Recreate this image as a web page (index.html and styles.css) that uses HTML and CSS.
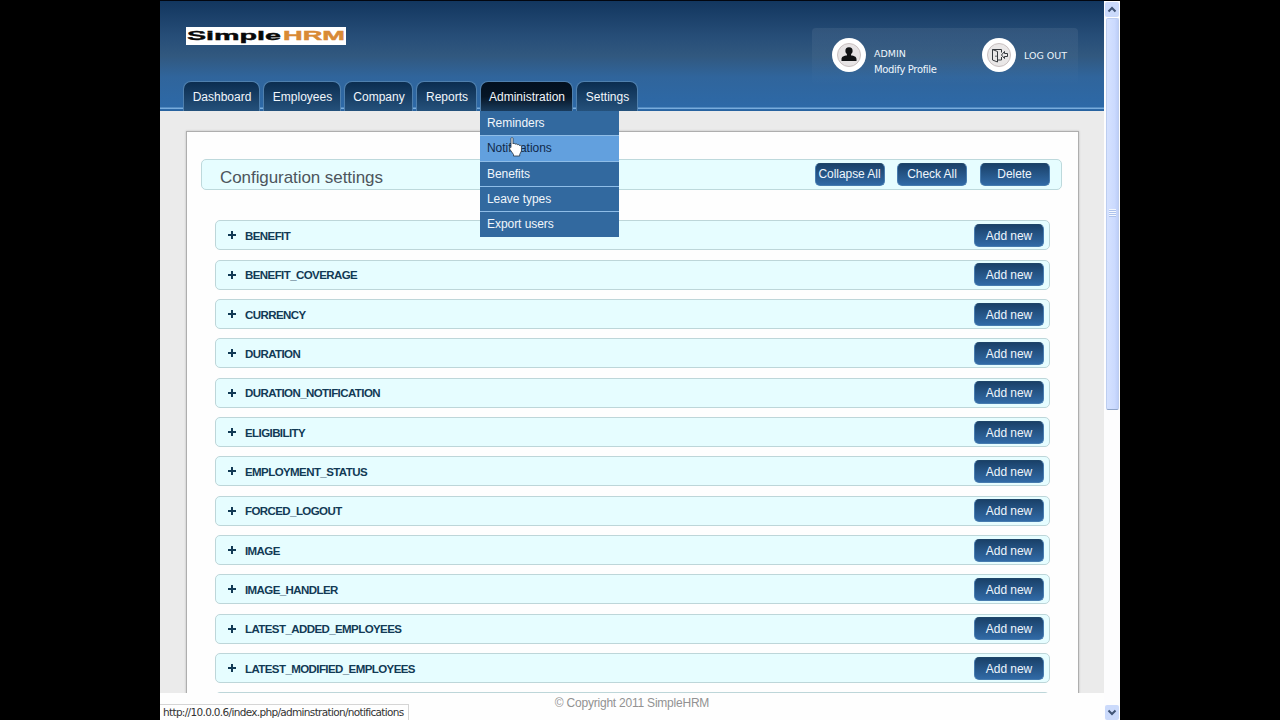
FILE: index.html
```html
<!DOCTYPE html>
<html>
  <head>
    <meta charset="utf-8">
    <title>SimpleHRM</title>
    <link rel="stylesheet" href="styles.css">
  </head>
  <body>
    <div class="screen">
      <div class="page">
        <div class="header">
          <div class="top">
            <svg class="logo" width="160" height="18" viewBox="0 0 160 18">
              <rect width="160" height="18" fill="#fff"/>
              <text x="1" y="13" textLength="94" lengthAdjust="spacingAndGlyphs" fill="#080808" stroke="#080808">Simple</text>
              <text x="97" y="13" textLength="62" lengthAdjust="spacingAndGlyphs" fill="#d98a35" stroke="#d98a35">HRM</text>
            </svg>
            <div class="user">
              <svg class="round" width="34" height="34" viewBox="0 0 34 34">
                <circle cx="17" cy="17" r="17" fill="#fff"/>
                <circle cx="17" cy="17" r="11.5" fill="#e6e3e4" stroke="#c9c0c0"/>
                <path d="M17 9.300c-2.500 0-3.800 1.600-3.600 3.900.1 1.400.8 2.200 1.500 2.800v1.400c-2.600.2-5.400 1-5.400 3.600v2h15v-2c0-2.600-2.800-3.400-5.400-3.600V16c.7-.6 1.400-1.400 1.500-2.800.2-2.300-1.100-3.900-3.600-3.900z" fill="#101214"/>
              </svg>
              <div class="profile">
                <div class="admin">ADMIN</div>
                <div class="modify">Modify Profile</div>
              </div>
              <svg class="round" width="34" height="34" viewBox="0 0 34 34">
                <circle cx="17" cy="17" r="17" fill="#fff"/>
                <circle cx="17" cy="17" r="11.5" fill="#e9e7e7" stroke="#c9c0c0"/>
                <path d="M10.500 11.500h9v3M10.500 11.500v10.500l5 2v-10.500l-5-2M15.500 22h4v-3M14 17.500v1.500M25.500 15.500h-3v-2l-3 3.500 3 3.500v-2h3z" fill="none" stroke="#34383c"/>
              </svg>
              <div class="logout">LOG OUT</div>
            </div>
          </div>
          <div class="nav">
            <div class="tab dashboard"><span>Dashboard</span></div>
            <div class="tab employees"><span>Employees</span></div>
            <div class="tab company"><span>Company</span></div>
            <div class="tab reports"><span>Reports</span></div>
            <div class="tab administration active"><span>Administration</span>
              <div class="menu">
                <div>Reminders</div>
                <div class="hover">Notifications</div>
                <div>Benefits</div>
                <div>Leave types</div>
                <div>Export users</div>
              </div>
            </div>
            <div class="tab settings"><span>Settings</span></div>
          </div>
        </div>
        <div class="content">
          <div class="panel">
            <div class="title">
              <h1>Configuration settings</h1>
              <div class="button">Collapse All</div>
              <div class="button">Check All</div>
              <div class="button">Delete</div>
            </div>
            <div class="rows">
              <div class="row"><i class="plus"></i><b>BENEFIT</b><div class="button">Add new</div></div>
              <div class="row"><i class="plus"></i><b>BENEFIT_COVERAGE</b><div class="button">Add new</div></div>
              <div class="row"><i class="plus"></i><b>CURRENCY</b><div class="button">Add new</div></div>
              <div class="row"><i class="plus"></i><b>DURATION</b><div class="button">Add new</div></div>
              <div class="row"><i class="plus"></i><b>DURATION_NOTIFICATION</b><div class="button">Add new</div></div>
              <div class="row"><i class="plus"></i><b>ELIGIBILITY</b><div class="button">Add new</div></div>
              <div class="row"><i class="plus"></i><b>EMPLOYMENT_STATUS</b><div class="button">Add new</div></div>
              <div class="row"><i class="plus"></i><b>FORCED_LOGOUT</b><div class="button">Add new</div></div>
              <div class="row"><i class="plus"></i><b>IMAGE</b><div class="button">Add new</div></div>
              <div class="row"><i class="plus"></i><b>IMAGE_HANDLER</b><div class="button">Add new</div></div>
              <div class="row"><i class="plus"></i><b>LATEST_ADDED_EMPLOYEES</b><div class="button">Add new</div></div>
              <div class="row"><i class="plus"></i><b>LATEST_MODIFIED_EMPLOYEES</b><div class="button">Add new</div></div>
              <div class="row"></div>
            </div>
          </div>
        </div>
        <div class="footer">
          <span>© Copyright 2011 SimpleHRM</span>
          <div class="status">http://10.0.0.6/index.php/adminstration/notifications</div>
        </div>
      </div>
      <div class="scrollbar">
        <svg class="arrow" width="14" height="15" viewBox="0 0 14 15"><path d="M3.500 9.500L7 6l3.500 3.500" /></svg>
        <div class="thumb"><div class="grip"></div></div>
        <svg class="arrow down" width="14" height="15" viewBox="0 0 14 15"><path d="M3.500 5.500L7 9l3.500-3.500" /></svg>
      </div>
    </div>
    <svg class="cursor" width="14" height="20" viewBox="0 0 14 20">
      <path d="M2 1.500C2 .3 4 .3 4 1.500V7c.3-1 2-.8 2.200.3.500-.9 2-.6 2.200.5.600-.7 1.900-.3 2 .7.900-.5 2 0 2 1.200V14l-1.700 3.500v1.500H4.500v-1.500L1 12.500C.3 11 .8 10 2 10.500z" fill="#fff" stroke="#26323f" stroke-width=".8"/>
    </svg>
  </body>
</html>
```
FILE: styles.css
```css
* {
  box-sizing: border-box;
}
body {
  margin: 0;
  background: #000;
  font-family: "Liberation Sans", Arial, sans-serif;
  font-size: 12px;
  overflow: hidden;
}
.screen {
  display: flex;
  width: 960px;
  height: 720px;
  margin: 0 auto;
  background: #fefefe;
}
.page {
  display: flex;
  flex-direction: column;
  width: 944px;
}
.header {
  height: 111px;
  border-top: 1px solid #020610;
  border-bottom: 1px solid #2863a0;
  background: linear-gradient(#12365f, #274e78 36px, #31587f 55px, #30659c 76px, #2d69a7 106px, #78acdc 107px, #78acdc 108px, #2d69a7 108px);
}
.top {
  display: flex;
  justify-content: space-between;
  height: 80px;
  padding: 26px 26px 0;
}
.logo {
  font-weight: bold;
  font-size: 13px;
  stroke-width: .4;
}
.user {
  display: flex;
  width: 266px;
  height: 58px;
  margin-top: 1px;
  padding: 10px 0 0 20px;
  border-radius: 4px;
  background: linear-gradient(rgba(255,255,255,.07), rgba(255,255,255,0));
  color: #edf5fc;
  font-size: 10px;
  font-family: "DejaVu Sans", Verdana, sans-serif;
}
.profile {
  width: 107px;
  margin-left: 8px;
  padding-top: 8px;
  line-height: 16px;
  white-space: nowrap;
}
.admin {
  font-size: 9.500px;
}
.modify {
  letter-spacing: -.35px;
}
.round {
  flex: none;
}
.profile + .round {
  margin-left: 1px;
}
.logout {
  padding: 10px 0 0 8px;
  font-size: 9.500px;
  line-height: 16px;
  white-space: nowrap;
}
.nav {
  display: flex;
  height: 30px;
  padding-left: 23px;
}
.tab {
  position: relative;
  height: 30px;
  margin-right: 3px;
  padding-left: 1px;
  border: 1px solid #4f80ae;
  border-bottom: 0;
  border-radius: 8px 8px 0 0;
  background: linear-gradient(#0b2d50, #25517b);
  color: #f1f6fb;
  text-align: center;
  line-height: 31px;
  white-space: nowrap;
}
.dashboard { width: 77px; }
.employees { width: 78px; }
.company { width: 69px; }
.reports { width: 61px; }
.administration { width: 93px; }
.settings { width: 62px; }
.active {
  background: linear-gradient(#02101f, #061525 50%, #193b5c);
}
.menu {
  position: absolute;
  left: -1px;
  top: 29px;
  z-index: 2;
  width: 139px;
  background: #32699f;
  text-align: left;
}
.menu div {
  height: 25.3px;
  padding-left: 7px;
  border-bottom: 1px solid #8fbde7;
  line-height: 24px;
  letter-spacing: -.05px;
}
.menu div:last-child {
  border-bottom: 0;
}
.menu .hover {
  background: #62a0de;
  color: #10294a;
}
.content {
  height: 582px;
  padding: 20px 25px 0 26px;
  overflow: hidden;
  background: #ebebeb;
}
.panel {
  height: 700px;
  padding: 27px 16px 0 14px;
  border: 1px solid #aeaeae;
  box-shadow: 0 0 2px #bbb;
  background: #fefefe;
}
.title {
  display: flex;
  align-items: flex-start;
  height: 31px;
  padding: 3px 11.500px 0 18px;
  border: 1px solid #bdd9dc;
  border-radius: 5px;
  background: #e6fdff;
}
h1 {
  flex: 1;
  margin: 0;
  color: #4d555c;
  font-size: 17px;
  font-weight: normal;
  line-height: 29px;
  letter-spacing: -.07px;
}
.button {
  width: 70px;
  height: 23px;
  border: 1px solid #477caf;
  border-top-color: #1e4569;
  border-radius: 5px;
  background: linear-gradient(#1a4169, #316aa6);
  color: #eef6fd;
  text-align: center;
  line-height: 21px;
  letter-spacing: -.05px;
  white-space: nowrap;
}
.title .button + .button {
  margin-left: 12.500px;
}
.rows {
  padding: 30.400px 12px 0 14px;
}
.row {
  display: flex;
  align-items: center;
  height: 30px;
  margin-bottom: 9.330px;
  padding: 0 5px 0 12px;
  border: 1px solid #bdd6d9;
  border-radius: 5px;
  background: #e6fdff;
}
.row b {
  flex: 1;
  margin-left: 9px;
  padding-top: 1px;
  color: #123a55;
  font-size: 11.500px;
  letter-spacing: -.58px;
}
.row .button {
  line-height: 22px;
}
.plus {
  width: 8px;
  height: 8px;
  background: linear-gradient(#123a55, #123a55) center / 8px 2px no-repeat, linear-gradient(#123a55, #123a55) center / 2px 8px no-repeat;
}
.footer {
  position: relative;
  height: 27px;
  padding-top: 3px;
  background: #fefefe;
  color: #929292;
  letter-spacing: -.22px;
  text-align: center;
}
.status {
  position: absolute;
  left: 0;
  top: 11px;
  width: 249px;
  height: 17px;
  padding-left: 3px;
  border: 1px solid #d5d5d5;
  border-left: 0;
  color: #333;
  font: 10.500px/15px "DejaVu Sans", sans-serif;
  letter-spacing: -.67px;
  text-align: left;
  white-space: nowrap;
}
.scrollbar {
  display: flex;
  flex-direction: column;
  align-items: center;
  width: 16px;
  padding: 1px 0 0;
  border-top: 1px solid #000;
  background: #fdfdfe;
}
.arrow {
  flex: none;
  border-radius: 2px;
  background: #cbdafb;
  fill: none;
  stroke: #405475;
  stroke-width: 2;
}
.down {
  margin-top: auto;
}
.thumb {
  width: 13px;
  height: 392px;
  margin-top: 1px;
  padding-top: 190px;
  border: 1px solid #bccdf0;
  border-bottom-color: #8fa4c8;
  border-radius: 2px;
  background: linear-gradient(to right, #d5e2ff, #cbdafe 70%, #bdcef8);
}
.grip {
  width: 7px;
  height: 8px;
  margin: 0 auto;
  background: repeating-linear-gradient(#f4f8ff 0, #f4f8ff 1px, #adc2ec 1px, #adc2ec 2px);
}
.cursor {
  position: absolute;
  left: 509px;
  top: 137px;
  z-index: 3;
}
```
